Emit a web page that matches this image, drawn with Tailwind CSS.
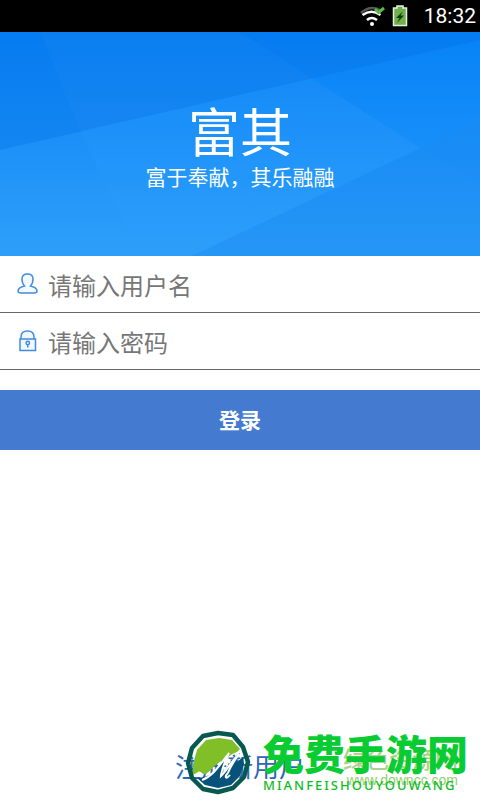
<!DOCTYPE html>
<html lang="zh-CN">
<head>
  <meta charset="UTF-8">
  <meta name="viewport" content="width=device-width, initial-scale=1.0">
  <title>富其 - 登录</title>
  <script src="https://cdn.jsdelivr.net/npm/@tailwindcss/browser@4"></script>
</head>
<body class="relative min-h-screen flex flex-col overflow-x-hidden bg-white font-['Noto_Sans_CJK_SC',sans-serif]">
  <!-- status bar -->
  <div class="h-8 flex items-center justify-end bg-black text-white pr-1">
    <svg class="w-7 h-6 mr-1" viewBox="0 0 28 24" fill="none">
      <path d="M1 9Q10 1 20 6" stroke="#555" stroke-width="2.500"/>
      <path d="M2.500 11Q11.500 4.500 20.500 11M7 16Q11.500 12 17 16" stroke="#fff" stroke-width="2.500"/>
      <circle cx="12" cy="20" r="2" fill="#fff"/>
      <path d="M15 5L18.500 8.500L24 4" stroke="#5db947" stroke-width="3"/>
    </svg>
    <svg class="w-4 h-6 mr-4" viewBox="0 0 16 24">
      <path d="M5 2H11V4H14.500V21.500H1.500V4H5Z" fill="#6fb04c" stroke="#e8f0e4" stroke-width="1.500"/>
      <path d="M11 7L4 14H7.500L5 19L12 11.500H8.500Z" fill="#123c0c"/>
    </svg>
    <span class="font-[Roboto,sans-serif] text-[21px] leading-8">18:32</span>
  </div>

  <header class="relative h-56 flex flex-col items-center bg-linear-to-b from-[#0782f6] to-[#2d9ffa] text-white">
    <svg class="absolute inset-0 w-full h-full" viewBox="0 0 480 224" preserveAspectRatio="none">
      <path d="M0 118L480 8V0H0Z" fill="#006ce6" fill-opacity=".3"/>
      <path d="M40 0L80 98L311 46L240 0Z" fill="#2c90f0" fill-opacity=".16"/>
      <path d="M80 98L311 46L421 116L192 224H138Z" fill="#30a4ff" fill-opacity=".15"/>
      <path d="M311 46L480 8V88L421 116Z" fill="#0088ff" fill-opacity=".2"/>
      <path d="M480 88L192 224H480Z" fill="#1484ee" fill-opacity=".3"/>
      <path d="M421 116L480 150V88Z" fill="#1888f4" fill-opacity=".12"/>
    </svg>
    <h1 class="relative mt-[67px] text-[52px] leading-[62px]">富其</h1>
    <p class="relative text-[21px] leading-[30px]">富于奉献，其乐融融</p>
  </header>

  <form class="flex flex-col" onsubmit="return false">
    <div class="h-[57px] flex items-center gap-2 px-4 border-b border-[#666]">
      <label for="username" aria-label="用户名">
        <svg class="w-6 h-6" viewBox="0 0 24 24" fill="#f2faff" stroke="#448bdc" stroke-width="1.500">
          <path d="M8.500 14C6.500 12 6 9.500 6 7C6 3.500 8.300 2 11.500 2S17 3.500 17 7C17 9.500 16.500 12 14.500 14C18.500 15 21 16.500 21 19C21 20.500 20 21 18 21H5C3 21 2 20.500 2 19C2 16.500 4.500 15 8.500 14Z"/>
        </svg>
      </label>
      <input id="username" type="text" placeholder="请输入用户名" class="flex-1 min-w-0 h-12 text-2xl text-gray-800 placeholder-[#777] outline-none">
    </div>
    <div class="h-[57px] flex items-center gap-2 px-4 border-b border-[#666]">
      <label for="password" aria-label="密码">
        <svg class="w-6 h-6" viewBox="0 0 24 24" fill="#eef8ff" stroke="#448bdc" stroke-width="1.500">
          <path d="M5 10V8C5 4 7.500 2 11.500 2S18 4 18 8V10"/>
          <path d="M4 10H19.500V21.500H4Z"/>
          <circle cx="11.750" cy="14" r="1.700"/>
          <path d="M11.750 15.500V18.500"/>
        </svg>
      </label>
      <input id="password" type="password" placeholder="请输入密码" class="flex-1 min-w-0 h-12 text-2xl text-gray-800 placeholder-[#777] outline-none">
    </div>
    <button type="submit" class="mt-5 h-[60px] bg-[#447bd0] text-white text-[21px] font-bold">登录</button>
  </form>

  <a href="#" class="mt-auto mb-4 self-center text-[26px] leading-9 text-[#2d67b8]">注册新用户</a>

  <!-- site marks over the page -->
  <div class="absolute right-[22px] bottom-[10px] text-[#a9d38c] text-right pointer-events-none">
    <p class="text-[23px] leading-6 font-medium">绿色资源网</p>
    <p class="font-['Liberation_Sans',sans-serif] text-sm leading-5 text-[#8fd070]">www.downcc.com</p>
  </div>
  <div class="absolute right-3 bottom-1 flex items-center gap-3 pointer-events-none">
    <svg class="w-[66px] h-[66px]" viewBox="0 0 66 66">
      <path d="M33 3L48 5L58 17L63 32L59 47L48 58L33 62L18 59L7 48L3 33L7 18L18 6Z" fill="none" stroke="#07584f" stroke-width="4.500" stroke-linejoin="round"/>
      <path d="M8 34L12 20L21 10L34 8L47 10L55 19L52 22C43 25 39 31 36 38L40 29C31 33 27 40 21 44C18 46 16 40 13 42L8 45Z" fill="#80bf28"/>
      <path d="M12 48C24 47 30 43 35 35L44 22C39 34 37 38 35 46C42 41 44 29 55 23C54 26 51 28 52 32L58 27L59 34L55 46L46 55L33 58L20 55Z" fill="#07527b"/>
      <path d="M17 50C28 46 34 36 44 23Q37 37 36 46C43 40 45 32 54 24Q45 37 43 43M43 43C39 47 41 50 45 45" fill="none" stroke="#fff" stroke-width="2"/>
    </svg>
    <div>
      <p class="text-[41px] leading-[43px] font-black text-[#08cc32]">免费手游网</p>
      <p class="font-['Noto_Sans',sans-serif] text-[13px] leading-[22px] font-medium tracking-[2px] text-[#10bd25]">MIANFEISHOUYOUWANG</p>
    </div>
  </div>
</body>
</html>
